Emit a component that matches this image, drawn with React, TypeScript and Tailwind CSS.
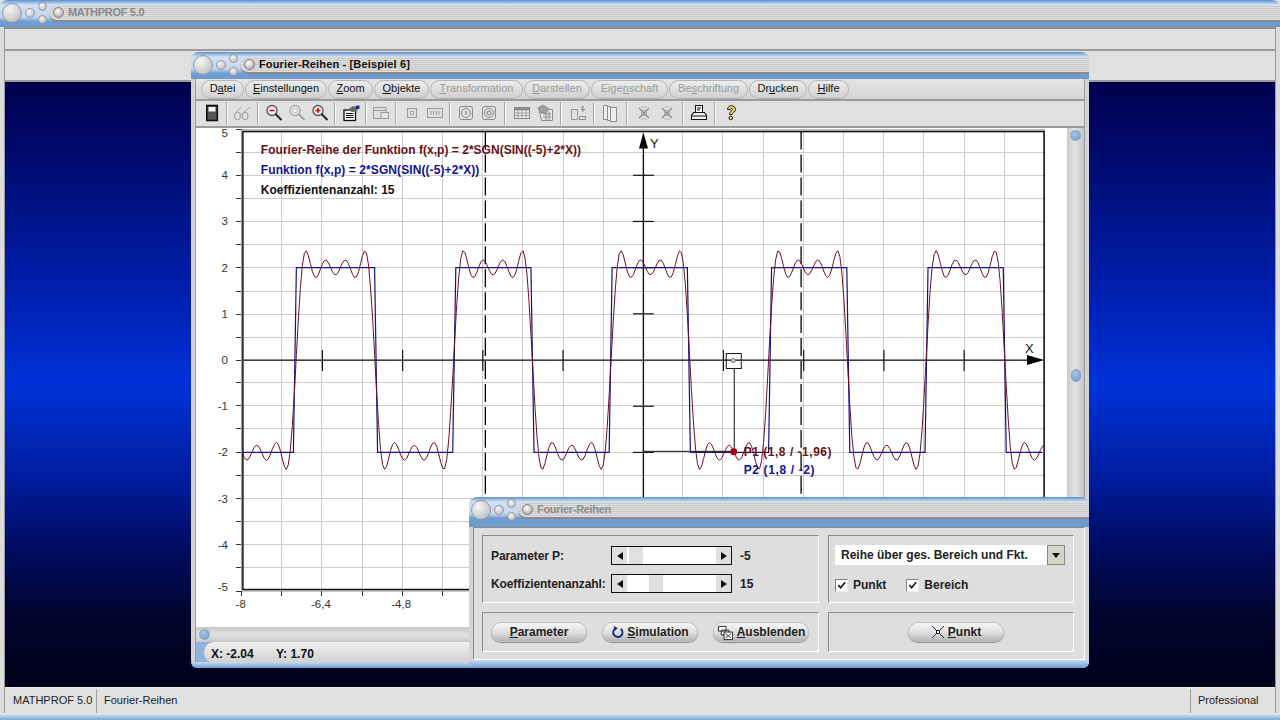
import type { ReactNode } from "react";

const FONT = "[font-family:'Liberation_Sans',Arial,sans-serif]";

// plot scale, in page pixels
const X0 = 643.3;
const Y0 = 360;
const UX = 50.25;
const UY = 46.3;

const px = (x: number) => X0 + x * UX;
const py = (y: number) => Y0 - y * UY;

const series = (x: number) => {
  const u = -5 + 2 * x;
  let s = 0;
  for (let n = 1; n <= 7; n += 2) s += Math.sin(n * u) / n;
  return (2 * 4 * s) / Math.PI;
};

const square = (x: number) => 2 * Math.sign(Math.sin(-5 + 2 * x));

const trace = (fn: (x: number) => number, step: number) => {
  const pts: string[] = [];
  for (let x = -8; x <= 8.001; x += step) pts.push(`${px(x).toFixed(1)},${py(fn(x)).toFixed(1)}`);
  return pts.join(" ");
};

function Circle({ size }: { size: string }) {
  return (
    <div className={`${size} shrink-0 rounded-full border border-[#8f9aa8] bg-[radial-gradient(circle_at_35%_30%,#f6f6f6,#b4b4b4)]`} />
  );
}

function TitleBar({ title, active, tall, dim }: { title: string; active?: boolean; tall?: boolean; dim?: boolean }) {
  return (
    <div className={`${tall ? "h-[30px] bg-[linear-gradient(180deg,#5f92cc_0%,#d2e1f1_16%,#c4d7ec_56%,#6f9dd2_70%,#6d9acc_100%)]" : "h-[27px] bg-[linear-gradient(180deg,#5f92cc_0%,#d2e1f1_18%,#c4d7ec_62%,#6f9dd2_80%,#6d9acc_100%)]"} shrink-0 flex rounded-t-[8px]`}>
      <div className="w-[49px] h-[25px] shrink-0 flex items-center pl-[2px] gap-[3px]">
        <Circle size="w-[20px] h-[20px]" />
        <Circle size="w-[10px] h-[10px]" />
        <div className="flex flex-col gap-[4px]">
          <Circle size="w-[9px] h-[9px]" />
          <Circle size="w-[9px] h-[9px]" />
        </div>
      </div>
      <div className="h-[17px] mt-[5px] flex-1 flex items-center rounded-l-[10px] border-b-[2px] border-[#8a8a8a] bg-[repeating-linear-gradient(180deg,#dedede_0px,#dedede_1px,#cacaca_1px,#cacaca_2px)]">
        <div className="ml-[4px] w-[11px] h-[11px] rounded-full border border-[#808080] bg-[radial-gradient(circle_at_40%_35%,#ffffff,#9a9a9a)]" />
        <span className={`ml-[4px] text-[11px] font-bold ${active ? "text-[#111111] tracking-[0.15px]" : dim ? "text-[#8a8a8a] tracking-[-0.3px]" : "text-[#8a8a8a]"}`}>{title}</span>
      </div>
    </div>
  );
}

function Mn({ a, k, b }: { a?: string; k: string; b?: string }) {
  return (
    <>
      {a}
      <span className="underline underline-offset-1">{k}</span>
      {b}
    </>
  );
}

const menus = [
  { a: "D", k: "a", b: "tei", w: "w-[43px]", on: true },
  { a: "", k: "E", b: "instellungen", w: "w-[82px]", on: true },
  { a: "", k: "Z", b: "oom", w: "w-[45px]", on: true },
  { a: "", k: "O", b: "bjekte", w: "w-[55px]", on: true },
  { a: "", k: "T", b: "ransformation", w: "w-[93px]", on: false },
  { a: "", k: "D", b: "arstellen", w: "w-[66px]", on: false },
  { a: "Eige", k: "n", b: "schaft", w: "w-[77px]", on: false },
  { a: "Be", k: "s", b: "chriftung", w: "w-[79px]", on: false },
  { a: "Dr", k: "u", b: "cken", w: "w-[58px]", on: true },
  { a: "", k: "H", b: "ilfe", w: "w-[41px]", on: true },
];

function Ico({ children }: { children: ReactNode }) {
  return (
    <svg viewBox="0 0 20 20" className="w-[20px] h-[20px]" fill="none">
      {children}
    </svg>
  );
}

const Lens = ({ sign, tint }: { sign: "-" | "+" | ""; tint: string }) => (
  <Ico>
    <circle cx="8" cy="7.500" r="5" stroke={sign ? "#555555" : "#a8a8a8"} strokeWidth="1.300" fill="#eeeeee" />
    {!sign && <circle cx="8" cy="7.500" r="2.500" stroke="#b8b8b8" />}
    <path d="M11.500 11l6 6" stroke={tint} strokeWidth="2" />
    {sign && <path d="M5.500 7.500h5" stroke="#c01020" strokeWidth="1.600" />}
    {sign === "+" && <path d="M8 5v5" stroke="#c01020" strokeWidth="1.600" />}
  </Ico>
);

const GridCross = () => (
  <Ico>
    <path d="M5 5l10 10M15 5L5 15" stroke="#8a8a8a" strokeWidth="1.300" />
    <circle cx="10" cy="10" r="2.500" stroke="#a0a0a0" />
    <path d="M7 4h6M7 16h6" stroke="#b4b4b4" />
  </Ico>
);

const tools: { icon: ReactNode; sep?: string }[] = [
  {
    icon: (
      <Ico>
        <rect x="4.800" y="2.500" width="10.500" height="15" fill="#555555" stroke="#111111" strokeWidth="1.600" />
        <rect x="6.500" y="4" width="7" height="4.500" fill="#f4f4f4" />
      </Ico>
    ),
    sep: "w-[7px]",
  },
  {
    icon: (
      <Ico>
        <ellipse cx="5.500" cy="13" rx="3" ry="3.800" stroke="#9a9a9a" />
        <ellipse cx="13" cy="13" rx="3" ry="3.800" stroke="#9a9a9a" />
        <path d="M8.500 12c1-1 1-1 1.700 0M4 9.500L9 4M11.500 9.500L17 4.500l1 1" stroke="#a0a0a0" />
      </Ico>
    ),
    sep: "w-[9px]",
  },
  { icon: <Lens sign="-" tint="#222222" /> },
  { icon: <Lens sign="" tint="#a0a0a0" /> },
  { icon: <Lens sign="+" tint="#222222" />, sep: "w-[8px]" },
  {
    icon: (
      <Ico>
        <rect x="3" y="7" width="11.500" height="10.500" fill="#ffffff" stroke="#111111" strokeWidth="1.300" />
        <path d="M5 10.500h7.500M5 12.500h7.500M5 14.500h7.500" stroke="#111111" />
        <path d="M6 7l6-4 4.500 1v4l-5 1z" fill="#666666" />
        <rect x="15" y="2.500" width="3.500" height="3.500" fill="#1a2a90" />
      </Ico>
    ),
    sep: "w-[7px]",
  },
  {
    icon: (
      <Ico>
        <rect x="2.500" y="4.500" width="12.500" height="11" stroke="#9a9a9a" />
        <path d="M2.500 7.500h12.500" stroke="#9a9a9a" />
        <rect x="10" y="9.500" width="7.500" height="6" fill="#e6e6e6" stroke="#9a9a9a" />
      </Ico>
    ),
    sep: "w-[8px]",
  },
  {
    icon: (
      <Ico>
        <rect x="5.500" y="5.500" width="9" height="9" stroke="#9a9a9a" />
        <rect x="8.500" y="8.500" width="3" height="3" stroke="#a8a8a8" />
      </Ico>
    ),
  },
  {
    icon: (
      <Ico>
        <rect x="2.500" y="5.500" width="15" height="9" stroke="#9a9a9a" />
        <path d="M6 8v4M8.500 8v4M11.500 8v4M14 8v4" stroke="#9a9a9a" />
      </Ico>
    ),
    sep: "w-[8px]",
  },
  {
    icon: (
      <Ico>
        <rect x="3.500" y="3.500" width="13" height="13" rx="2" stroke="#8a8a8a" />
        <circle cx="10" cy="10" r="4.500" stroke="#8a8a8a" />
        <path d="M10 8v4" stroke="#777777" />
      </Ico>
    ),
  },
  {
    icon: (
      <Ico>
        <rect x="3.500" y="3.500" width="13" height="13" rx="2" stroke="#8a8a8a" />
        <circle cx="10" cy="10" r="4.500" stroke="#8a8a8a" />
        <circle cx="10" cy="10" r="2" stroke="#777777" />
      </Ico>
    ),
    sep: "w-[10px]",
  },
  {
    icon: (
      <Ico>
        <rect x="2.500" y="4.500" width="15" height="11" fill="#eeeeee" stroke="#8a8a8a" />
        <rect x="3" y="5" width="14" height="2.500" fill="#8a8a8a" />
        <path d="M2.500 10h15M2.500 12.500h15M6 7.500v8M10 7.500v8M14 7.500v8" stroke="#a0a0a0" />
      </Ico>
    ),
  },
  {
    icon: (
      <Ico>
        <path d="M4 6.500h13.500v11H6.500z" fill="#e8e8e8" stroke="#8a8a8a" />
        <path d="M3 5l5-3 6 4-3 4H6z" fill="#a0a0a0" stroke="#8a8a8a" />
        <path d="M8 11h8M8 14h8M11 9v8M14 9v8" stroke="#8f8f8f" />
      </Ico>
    ),
    sep: "w-[10px]",
  },
  {
    icon: (
      <Ico>
        <rect x="3.500" y="6.500" width="6" height="10" stroke="#9a9a9a" />
        <path d="M11.500 16.500h6v-3h-6zM13 6.500h4M15 3v6M13 5l2-2" stroke="#8a8a8a" />
      </Ico>
    ),
    sep: "w-[9px]",
  },
  {
    icon: (
      <Ico>
        <path d="M3.500 2.500h4v14h-4zM7.500 3.500h3v14h-3zM10.500 4.500h6v14h-6z" fill="#eeeeee" stroke="#8a8a8a" />
      </Ico>
    ),
    sep: "w-[11px]",
  },
  { icon: <GridCross /> },
  { icon: <GridCross />, sep: "w-[9px]" },
  {
    icon: (
      <Ico>
        <rect x="6.500" y="2.500" width="7" height="7" fill="#ffffff" stroke="#111111" />
        <path d="M8 5h4M8 7h3" stroke="#111111" />
        <path d="M4.500 9.500h11l2 3v4h-15v-4z" fill="#f0f0f0" stroke="#111111" strokeWidth="1.100" />
        <path d="M2.500 13h15" stroke="#111111" />
      </Ico>
    ),
    sep: "w-[9px]",
  },
  {
    icon: (
      <Ico>
        <path d="M6.500 6.500c0-5 8-5 8 0 0 2.500-3 2.500-3.500 5h-2.500c0-3.500 3-3.500 3-5 0-1.500-2-1.500-2 0z" fill="#f2e34c" stroke="#222222" />
        <circle cx="9.800" cy="15" r="1.800" fill="#f2e34c" stroke="#222222" />
      </Ico>
    ),
  },
];

function Toolbar() {
  return (
    <div className="h-[29px] shrink-0 flex items-center border-t-[2px] border-b-[2px] border-[#9a9a9a] bg-[#e0e0e0] pl-[4px] pb-[1px]">
      {tools.map((t, i) => (
        <div key={i} className="flex items-center">
          <div className="w-[23px] flex justify-center">{t.icon}</div>
          {t.sep && (
            <div className={`${t.sep} h-[23px] flex justify-center`}>
              <div className="w-[2px] border-l border-r border-l-[#a8a8a8] border-r-[#f6f6f6]" />
            </div>
          )}
        </div>
      ))}
    </div>
  );
}

function Plot() {
  const gridX = Array.from({ length: 21 }, (_, i) => Math.round(241 + i * 40.2));
  const gridY = Array.from({ length: 21 }, (_, i) => Math.round(Y0 + (i - 10) * 23.15));
  const ticksX = [-6.4, -4.8, -3.2, -1.6, 1.6, 3.2, 4.8, 6.4];
  const labelsY = [5, 4, 3, 2, 1, 0, -1, -2, -3, -4, -5];
  const labelsX = [-8, -6.4, -4.8];
  return (
    <svg viewBox="195 128 873 499" className="w-[873px] h-[499px] block bg-white" style={{ fontFamily: "'Liberation Sans', Arial, sans-serif" }}>
      <g stroke="#cdcdcd" strokeWidth="1" shapeRendering="crispEdges">
        {gridX.map((x) => (
          <line key={x} x1={x} y1={130} x2={x} y2={590} />
        ))}
        {gridY.map((y) => (
          <line key={y} x1={241} y1={y} x2={1045} y2={y} />
        ))}
      </g>
      <g stroke="#333333" strokeWidth="1" shapeRendering="crispEdges">
        {gridY.map((y) => (
          <line key={y} x1={235} y1={y} x2={241} y2={y} />
        ))}
        {gridX.map((x) => (
          <line key={x} x1={x} y1={591} x2={x} y2={597} />
        ))}
      </g>
      <rect x="240.500" y="129.500" width="805" height="461" fill="none" stroke="#a0a0a0" strokeWidth="1" />
      <rect x="242" y="131" width="803" height="459" fill="none" stroke="#111111" strokeWidth="1.500" />

      <g stroke="#000000" strokeWidth="1.300" strokeDasharray="18 5">
        <line x1={485} y1={131} x2={485} y2={590} />
        <line x1={801.500} y1={131} x2={801.500} y2={590} />
      </g>

      <g stroke="#111111" strokeWidth="1.200">
        <line x1={243} y1={360} x2={1032} y2={360} />
        <line x1={643.500} y1={146} x2={643.500} y2={590} />
        {ticksX.map((t) => (
          <line key={t} x1={px(t)} y1={350} x2={px(t)} y2={371} />
        ))}
        {labelsY.filter((v) => v !== 0 && Math.abs(v) < 5).map((v) => (
          <line key={v} x1={633} y1={py(v)} x2={654} y2={py(v)} />
        ))}
      </g>
      <polygon points="1045,360 1028,355 1028,365" fill="#000000" />
      <polygon points="643.500,132 639,148 648,148" fill="#000000" />
      <text x="1026" y="353" fontSize="13" fill="#111111">X</text>
      <text x="650" y="147" fontSize="13" fill="#111111">Y</text>

      <polyline points={trace(square, 0.06)} fill="none" stroke="#12128a" strokeWidth="1.200" />
      <polyline points={trace(series, 0.04)} fill="none" stroke="#6a0f22" strokeWidth="1" />

      <rect x="726.500" y="353.500" width="15" height="15" fill="none" stroke="#111111" />
      <circle cx="733.500" cy="360.500" r="2" fill="#dddddd" stroke="#666666" />
      <line x1={734.500} y1={368} x2={734.500} y2={452} stroke="#111111" />
      <line x1={643} y1={451.500} x2={734} y2={451.500} stroke="#111111" />
      <circle cx="734" cy="452" r="3.500" fill="#b00020" />

      <text x="260" y="153.500" fontSize="12" fontWeight="700" fill="#6b0f14" textLength={321}>Fourier-Reihe der Funktion f(x,p) = 2*SGN(SIN((-5)+2*X))</text>
      <text x="260" y="173.500" fontSize="12" fontWeight="700" fill="#10109a" textLength={219}>Funktion f(x,p) = 2*SGN(SIN((-5)+2*X))</text>
      <text x="260" y="193.500" fontSize="12" fontWeight="700" fill="#111111" textLength={134}>Koeffizientenanzahl: 15</text>
      <text x="744" y="456.500" fontSize="12" fontWeight="700" fill="#6b0f14" textLength={88}>P1 (1,8 / -1,96)</text>
      <text x="744" y="474.500" fontSize="12" fontWeight="700" fill="#10109a" textLength={71}>P2 (1,8 / -2)</text>

      <g fontSize="11.500" fill="#333333">
        {labelsY.map((v) => (
          <text key={v} x={227} y={v === 5 ? 136 : v === -5 ? 591 : py(v) + 4} textAnchor="end">{v}</text>
        ))}
        {labelsX.map((v) => (
          <text key={v} x={px(v) - 1.500} y={609} textAnchor="middle">{String(v).replace(".", ",")}</text>
        ))}
      </g>
    </svg>
  );
}

function Knob({ tall }: { tall?: boolean }) {
  return (
    <div className={`${tall ? "w-[10px] h-[13px]" : "w-[11px] h-[11px]"} shrink-0 rounded-full border border-[#8aa6c8] bg-[radial-gradient(circle_at_40%_35%,#a8c4e8,#6f97cc)]`} />
  );
}

function FourierWindow() {
  return (
    <div className="absolute left-[191px] top-[52px] w-[898px] h-[616px] flex flex-col rounded-[8px] bg-[#d4d4d4]">
      <TitleBar title="Fourier-Reihen - [Beispiel 6]" active />
      <div className="flex-1 flex flex-col mx-[4px] border-x border-[#9a9a9a] bg-[#e0e0e0] min-h-0">
        <div className="h-[20px] shrink-0 flex items-center pl-[5px] gap-[1px] bg-[linear-gradient(180deg,#e4e4e4,#d4d4d4)]">
          {menus.map((m) => (
            <div key={m.b} className={`${m.w} h-[19px] flex items-center justify-center pb-[1px] rounded-full border border-[#b4b4b4] bg-[linear-gradient(180deg,#ececec_0%,#d0d0d0_100%)] text-[11px] ${m.on ? "text-[#111111]" : "text-[#9a9a9a]"}`}>
              <Mn a={m.a} k={m.k} b={m.b} />
            </div>
          ))}
        </div>
        <Toolbar />
        <div className="h-[499px] shrink-0 flex">
          <Plot />
          <div className="w-[17px] shrink-0 flex flex-col items-center pt-[2px] bg-[linear-gradient(90deg,#c8c8c8,#e4e4e4_45%,#c4c4c4)]">
            <Knob />
            <div className="mt-[228px]">
              <Knob tall />
            </div>
          </div>
        </div>
        <div className="h-[15px] shrink-0 flex items-center pl-[3px] bg-[linear-gradient(180deg,#c6c6c6,#e2e2e2_50%,#c8c8c8)]">
          <Knob />
        </div>
        <div className="flex-1 flex bg-[linear-gradient(90deg,#8fb3de,#c8daee)]">
          <div className="flex-1 ml-[8px] flex items-center rounded-l-[10px] bg-[linear-gradient(180deg,#f2f2f2,#cfcfcf)] pl-[7px] pt-[3px] text-[12px] font-bold text-[#111111]">
            <span className="w-[65px]">X: -2.04</span>
            <span>Y: 1.70</span>
          </div>
        </div>
      </div>
      <div className="h-[6px] shrink-0 rounded-b-[6px] bg-[linear-gradient(180deg,#c8daee,#6f9dd2)]" />
    </div>
  );
}

function Arrow({ left }: { left?: boolean }) {
  return (
    <div className="w-[15px] h-[17px] shrink-0 flex items-center justify-center bg-[#e0e0e0]">
      <svg viewBox="0 0 6 8" className="w-[6px] h-[8px]">
        <polygon points={left ? "6,0 0,4 6,8" : "0,0 6,4 0,8"} fill="#111111" />
      </svg>
    </div>
  );
}

function Slider({ label, value, thumb }: { label: string; value: string; thumb: string }) {
  return (
    <div className="h-[19px] flex items-center text-[12px] font-bold text-[#222222]">
      <span className="w-[120px] tracking-[-0.1px]">{label}</span>
      <div className="w-[121px] h-[19px] flex items-center border border-[#111111] bg-white">
        <Arrow left />
        <div className="flex-1 h-[17px] flex">
          <div className={`${thumb} h-[17px]`} />
          <div className="w-[14px] h-[17px] bg-[#e0e0e0]" />
        </div>
        <Arrow />
      </div>
      <span className="ml-[8px]">{value}</span>
    </div>
  );
}

function Pill({ children }: { children: ReactNode }) {
  return (
    <div className="w-[96px] h-[20px] flex items-center justify-center gap-[3px] rounded-full border border-[#c0c0c0] bg-[linear-gradient(180deg,#f6f6f6_0%,#dedede_55%,#b4b4b4_100%)] shadow-[0_1px_1px_#8a8a8a] text-[12px] font-bold text-[#222222]">
      {children}
    </div>
  );
}

function Check({ label }: { label: string }) {
  return (
    <div className="flex items-center gap-[5px] text-[12px] font-bold text-[#222222]">
      <div className="w-[13px] h-[13px] flex items-center justify-center bg-white border border-[#808080] border-r-[#eeeeee] border-b-[#eeeeee]">
        <svg viewBox="0 0 10 10" className="w-[9px] h-[9px]">
          <path d="M1.500 4.500l2.500 3 5-6" fill="none" stroke="#111111" strokeWidth="1.800" />
        </svg>
      </div>
      {label}
    </div>
  );
}

const GROOVE = "border border-[#8a8a8a] border-r-white border-b-white";

function DialogWindow() {
  return (
    <div className="absolute left-[469px] top-[497px] w-[620px] h-[171px] flex flex-col rounded-[8px] bg-[#d4d4d4]">
      <TitleBar title="Fourier-Reihen" tall dim />
      <div className="flex-1 mx-[4px] border border-[#8a8a8a] border-r-white border-b-white bg-[#dedede]">
        <div className="grid grid-cols-[337px_246px] grid-rows-[68px_40px] gap-[9px] pl-[8px] pt-[7px]">
          <div className={`${GROOVE} flex flex-col gap-[9px] pl-[8px] pt-[10px]`}>
            <Slider label="Parameter P:" value="-5" thumb="w-[2px]" />
            <Slider label="Koeffizientenanzahl:" value="15" thumb="w-[22px]" />
          </div>
          <div className={`${GROOVE} flex flex-col pl-[6px] pt-[9px]`}>
            <div className="w-[230px] h-[20px] flex items-center justify-between bg-white text-[12px] font-bold text-[#222222] pl-[6px]">
              Reihe über ges. Bereich und Fkt.
              <div className="w-[18px] h-[20px] flex items-center justify-center border border-[#8a8a80] bg-[#d4d4c8]">
                <svg viewBox="0 0 8 5" className="w-[8px] h-[5px]">
                  <polygon points="0,0 8,0 4,5" fill="#111111" />
                </svg>
              </div>
            </div>
            <div className="flex gap-[20px] mt-[11px]">
              <Check label="Punkt" />
              <Check label="Bereich" />
            </div>
          </div>
          <div className={`${GROOVE} flex items-center pl-[8px] gap-[15px]`}>
            <Pill>
              <span><span className="underline">P</span>arameter</span>
            </Pill>
            <Pill>
              <svg viewBox="0 0 14 14" className="w-[13px] h-[13px]">
                <path d="M5 2.500A5 5 0 1 0 10.500 3" fill="none" stroke="#16307a" strokeWidth="2" />
                <polygon points="3,0 7.500,2.500 3.500,5.500" fill="#16307a" />
              </svg>
              <span><span className="underline">S</span>imulation</span>
            </Pill>
            <Pill>
              <svg viewBox="0 0 18 18" className="w-[17px] h-[17px]">
                <path d="M1.500 2.500h8v5h-8zM4.500 6.500h8v5h-8z" fill="#ffffff" stroke="#222222" />
                <path d="M7.500 8.500h9v8h-9z" fill="#ffffff" stroke="#222222" />
                <path d="M9 10l6 5M15 10l-6 5" stroke="#333333" />
              </svg>
              <span><span className="underline">A</span>usblenden</span>
            </Pill>
          </div>
          <div className={`${GROOVE} flex items-center justify-center pl-[10px]`}>
            <Pill>
              <svg viewBox="0 0 14 14" className="w-[14px] h-[14px]">
                <path d="M1 1l4.500 4.500M13 1L8.500 5.500M1 13l4.500-4.500M13 13L8.500 8.500" stroke="#2a2a60" />
                <rect x="5.500" y="5.500" width="3" height="3" fill="#ffffff" stroke="#222222" />
              </svg>
              <span><span className="underline">P</span>unkt</span>
            </Pill>
          </div>
        </div>
      </div>
      <div className="h-[8px] shrink-0 rounded-b-[6px] bg-[linear-gradient(180deg,#c8daee,#6f9dd2)]" />
    </div>
  );
}

export default function App() {
  return (
    <div className={`${FONT} relative w-[1280px] h-[720px] overflow-hidden flex flex-col bg-[#dcdcdc]`}>
      <TitleBar title="MATHPROF 5.0" dim />
      <div className="flex-1 flex flex-col mx-[4px] border-l border-r border-[#9a9a9a] min-h-0">
        <div className="h-[22px] shrink-0 border-t-[2px] border-[#8f8f8f] bg-[#e0e0e0]" />
        <div className="h-[33px] shrink-0 border-t-[2px] border-b-[2px] border-[#9a9a9a] bg-[#e0e0e0]" />
        <div className="flex-1 bg-[linear-gradient(180deg,#00004e_0%,#00107e_18%,#0022b8_38%,#0032d8_50%,#001c9c_66%,#000c60_77%,#00052e_88%,#000018_100%)]" />
        <div className="h-[26px] shrink-0 flex items-center border-t border-[#f0f0f0] bg-[#e0e0e0] text-[11px] text-[#222222]">
          <div className="w-[92px] h-[24px] flex items-center pl-[8px] border-r border-[#a0a0a0]">MATHPROF 5.0</div>
          <div className="flex-1 h-[24px] flex items-center pl-[7px] border-r border-[#a0a0a0]">Fourier-Reihen</div>
          <div className="w-[84px] h-[24px] flex items-center pl-[7px]">Professional</div>
        </div>
      </div>
      <div className="h-[7px] shrink-0 bg-[linear-gradient(180deg,#e8eef6,#7ba3d4)]" />
      <FourierWindow />
      <DialogWindow />
    </div>
  );
}
